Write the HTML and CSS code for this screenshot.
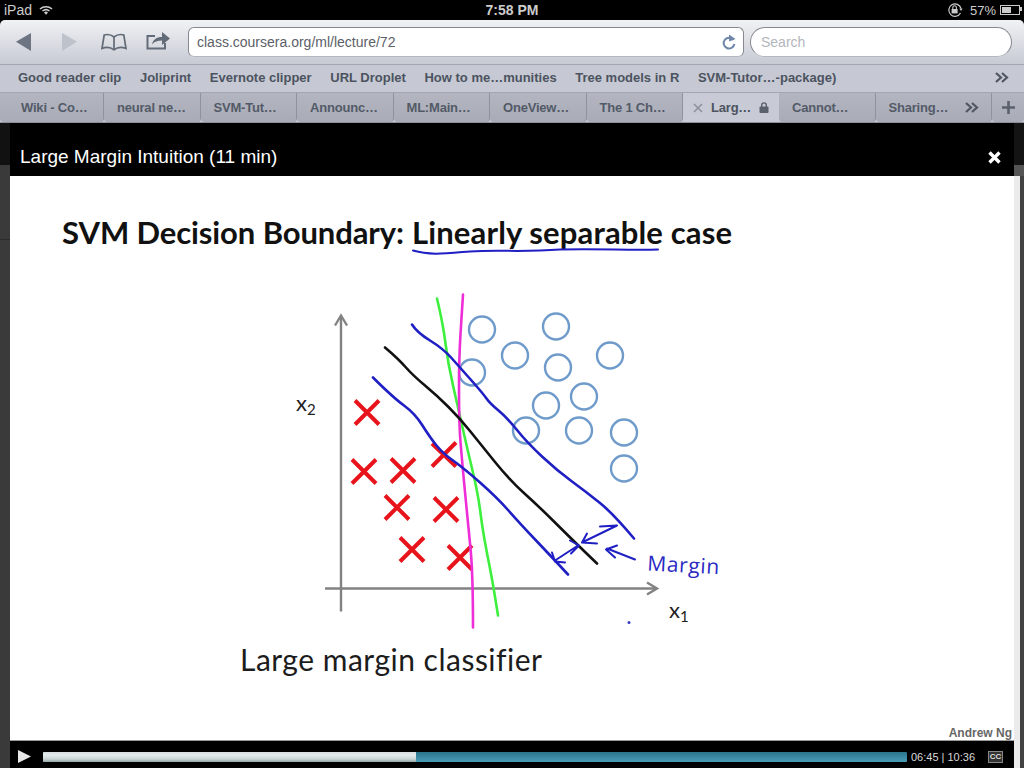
FILE: index.html
```html
<!DOCTYPE html>
<html lang="en">
<head>
  <meta charset="UTF-8">
  <title>Large Margin Intuition</title>
  <link rel="stylesheet" href="styles.css">
</head>
<body>
  <div class="status">
    <div class="status-left">
      <span>iPad</span>
      <svg class="wifi" width="14" height="10" viewBox="0 0 14 10">
        <path d="M1 4 A9 9 0 0 1 13 4" fill="none" stroke="#ccc" stroke-width="1.6"/>
        <path d="M3.5 6 A5.5 5.5 0 0 1 10.5 6" fill="none" stroke="#ccc" stroke-width="1.6"/>
        <path d="M5 7.5 L7 9.8 L9 7.5 A3 3 0 0 0 5 7.5 Z" fill="#ccc"/>
      </svg>
    </div>
    <div class="status-time">7:58 PM</div>
    <div class="status-right">
      <svg class="rotation-lock" width="16" height="16" viewBox="0 0 16 16">
        <path d="M14 6.5 A6.2 6.2 0 1 0 13.5 11" fill="none" stroke="#ccc" stroke-width="1.2"/>
        <path d="M12.3 6.5 L15.6 6.5 L14 9 Z" fill="#ccc"/>
        <rect x="4.6" y="7" width="6" height="4.4" fill="#ccc"/>
        <path d="M5.8 7 V5.6 A1.8 1.8 0 0 1 9.4 5.6 V7" fill="none" stroke="#ccc" stroke-width="1.1"/>
      </svg>
      <span class="battery-pct">57%</span>
      <div class="battery"><div class="battery-fill"></div></div>
    </div>
  </div>

  <div class="chrome">
    <div class="toolbar">
      <svg class="tool back" width="15" height="18" viewBox="0 0 15 18"><path d="M0 8.8 L15 0 V18 Z" fill="#6d7582"/></svg>
      <svg class="tool forward" width="15" height="18" viewBox="0 0 15 18"><path d="M15 8.8 L0 0 V18 Z" fill="#bdc2cb"/></svg>
      <svg class="tool book" width="26" height="18" viewBox="0 0 26 18">
        <path d="M13 4 C10 1.5 6 1.2 3.2 2 L1 15.5 C5 14 10 14.5 13 16.8 C16 14.5 21 14 25 15.5 L22.8 2 C20 1.2 16 1.5 13 4 Z M13 4 V16.8" fill="none" stroke="#636b78" stroke-width="1.7"/>
      </svg>
      <svg class="tool share" width="24" height="19" viewBox="0 0 24 19">
        <path d="M9 5 H1.5 V17.5 H19 V12" fill="none" stroke="#636b78" stroke-width="2"/>
        <path d="M6 13.5 C7 8.5 10.5 6 16 6 V1 L24 7.5 L16 14 V9.5 C11.5 9.5 8.5 10.5 6 13.5 Z" fill="#636b78"/>
      </svg>
      <div class="url">
        <span class="url-text">class.coursera.org/ml/lecture/72</span>
        <svg width="16" height="17" viewBox="0 0 16 17">
          <path d="M12.5 6 A5.4 5.4 0 1 0 13.4 10" fill="none" stroke="#6f87a8" stroke-width="2"/>
          <path d="M8 0.5 L14.5 5 L8 7.5 Z" fill="#6f87a8"/>
        </svg>
      </div>
      <div class="search">Search</div>
    </div>
    <div class="bookmarks">
      <span>Good reader clip</span>
      <span>Joliprint</span>
      <span>Evernote clipper</span>
      <span>URL Droplet</span>
      <span>How to me…munities</span>
      <span>Tree models in R</span>
      <span>SVM-Tutor…-package)</span>
      <svg class="chevrons" width="14" height="11" viewBox="0 0 14 11">
        <path d="M1 1 L6 5.5 L1 10 M7 1 L12 5.5 L7 10" fill="none" stroke="#4f5662" stroke-width="2.2"/>
      </svg>
    </div>
    <div class="tabs">
      <div class="tab first">Wiki - Co…</div>
      <div class="tab">neural ne…</div>
      <div class="tab">SVM-Tut…</div>
      <div class="tab">Announc…</div>
      <div class="tab">ML:Main…</div>
      <div class="tab">OneView…</div>
      <div class="tab">The 1 Ch…</div>
      <div class="tab active">
        <svg width="10" height="10" viewBox="0 0 10 10"><path d="M1 1 L9 9 M9 1 L1 9" stroke="#8b909b" stroke-width="1.5"/></svg>
        <span>Larg…</span>
        <svg width="10" height="11" viewBox="0 0 10 11">
          <rect x="0.5" y="4.5" width="9" height="6.5" rx="1" fill="#5a606c"/>
          <path d="M2.7 5 V3.2 A2.3 2.3 0 0 1 7.3 3.2 V5" fill="none" stroke="#5a606c" stroke-width="1.4"/>
        </svg>
      </div>
      <div class="tab">Cannot…</div>
      <div class="tab wide">
        <span>Sharing…</span>
        <svg width="14" height="11" viewBox="0 0 14 11">
          <path d="M1 1 L6 5.5 L1 10 M7 1 L12 5.5 L7 10" fill="none" stroke="#4f5662" stroke-width="2.2"/>
        </svg>
      </div>
      <div class="tab plus">
        <svg width="13" height="13" viewBox="0 0 13 13"><path d="M6.5 0 V13 M0 6.5 H13" stroke="#5a606c" stroke-width="2.6"/></svg>
      </div>
    </div>
  </div>

  <div class="stage">
    <div class="strip strip-left"></div>
    <div class="modal">
      <div class="modal-head">
        <span class="modal-title">Large Margin Intuition (11 min)</span>
        <svg width="13" height="13" viewBox="0 0 13 13"><path d="M1.5 1.5 L11.5 11.5 M11.5 1.5 L1.5 11.5" stroke="#fff" stroke-width="3.4"/></svg>
      </div>
      <svg class="slide" viewBox="10 175.5 1004 564" width="1004" height="564">
        <text class="slide-title" x="62" y="243" textLength="342">SVM Decision Boundary:</text>
        <text class="slide-title" x="412" y="243" textLength="320">Linearly separable case</text>
        <path class="ink-blue thin" d="M413 250 C430 255 445 253 470 251 C500 249 520 252 560 249 C600 248 630 250 658 249"/>

        <path class="axis" d="M341 316 V611 M325 588 H655"/>
        <path class="axis head" d="M335 325 L341 315 L347 325 M647 582 L657 588 L647 594"/>

        <g class="crosses">
          <path d="M355 400 L379 424 M379 400 L355 424"/>
          <path d="M352 459 L376 483 M376 459 L352 483"/>
          <path d="M391 458 L415 482 M415 458 L391 482"/>
          <path d="M432 443 L456 466 M456 442 L432 466"/>
          <path d="M385 495 L409 519 M409 495 L385 519"/>
          <path d="M434 497 L458 521 M458 497 L434 521"/>
          <path d="M400 537 L424 561 M424 537 L400 561"/>
          <path d="M448 545 L472 569 M472 545 L448 569"/>
        </g>

        <g class="circles">
          <circle cx="482" cy="329" r="13"/>
          <circle cx="556" cy="326" r="13"/>
          <circle cx="515" cy="355" r="13"/>
          <circle cx="558" cy="367" r="13"/>
          <circle cx="610" cy="355" r="13"/>
          <circle cx="472" cy="372" r="13"/>
          <circle cx="584" cy="396" r="13"/>
          <circle cx="546" cy="405" r="13"/>
          <circle cx="526" cy="430" r="13"/>
          <circle cx="579" cy="430" r="13"/>
          <circle cx="624" cy="432" r="13"/>
          <circle cx="624" cy="468" r="13"/>
        </g>

        <path class="ink-green" d="M437 298 Q443 323 445.5 343 Q448 363 453 385 Q458 407 462.5 427 Q467 447 472.5 470 Q478 493 480 509 Q482 525 484.5 539 Q487 553 490 568 Q493 583 498 615"/>
        <path class="ink-pink" d="M463 294 Q462 310 460.5 333.5 Q459 357 459 390 Q459 423 460.5 441.5 Q462 460 465 491.5 Q468 523 470.5 548 Q473 573 473 627"/>
        <path class="ink-black" d="M385 347 Q398 358 405.5 366.5 Q413 375 425 385 Q437 395 448.5 406.5 Q460 418 470 430.5 Q480 443 495 461.5 Q510 480 525 493.5 Q540 507 556.5 523.5 Q573 540 597 563"/>
        <path class="ink-blue" d="M412 324 Q417 332 430 340 Q443 348 451.5 357.5 Q460 367 471.5 380 Q483 393 486.5 398 Q490 403 498.5 410 Q507 417 517 429.5 Q527 442 542 456 Q557 470 572 481 Q587 492 600 502.5 Q613 513 634 538"/>
        <path class="ink-blue" d="M373 377 Q393 397 404 405 Q415 413 422.5 425 Q430 437 436.5 445 Q443 453 453 460 Q463 467 480 482 Q497 497 508.5 510 Q520 523 537.5 541.5 Q555 560 568 574"/>
        <path class="ink-blue thin" d="M555 560 L578 545 M570 540 L579 545 L571 553 M552 552 L555 561 L565 562"/>
        <path class="ink-blue thin" d="M582 542 L617 525 L600 526 M587 533 L582 542 L597 543"/>
        <path class="ink-blue thin" d="M635 559 L607 548 M617 545 L606 549 L615 557"/>
        <text class="margin-note" x="647" y="570" textLength="72" transform="rotate(3 647 570)">Margin</text>
        <circle cx="629" cy="622" r="1.5" fill="#3a3ac8"/>

        <text class="axis-label" x="296" y="410">x<tspan class="sub" dy="4">2</tspan></text>
        <text class="axis-label" x="669" y="617">x<tspan class="sub" dy="4">1</tspan></text>
        <text class="caption" x="240" y="670" textLength="302">Large margin classifier</text>
        <text class="credit" x="1012" y="736">Andrew Ng</text>
      </svg>
      <div class="controls">
        <svg class="play" width="13" height="13" viewBox="0 0 13 13"><path d="M0 0 L13 6.5 L0 13 Z" fill="#e8e8e8"/></svg>
        <div class="progress">
          <div class="progress-played" style="width: 43.2%"></div>
        </div>
        <span class="time">06:45 | 10:36</span>
        <span class="cc">CC</span>
      </div>
    </div>
    <div class="strip strip-right"></div>
  </div>
</body>
</html>
```

FILE: styles.css
```css
html, body {
  margin: 0;
  padding: 0;
  height: 100%;
  overflow: hidden;
  background: #000;
  font-family: "Liberation Sans", Arial, sans-serif;
}
body {
  display: flex;
  flex-direction: column;
}

/* ipad status bar */
.status {
  height: 20px;
  flex: none;
  display: flex;
  align-items: center;
  justify-content: space-between;
  position: relative;
  padding: 0 2px 0 4px;
  color: #ccc;
  font-size: 14px;
}
.status-left {
  display: flex;
  align-items: center;
  gap: 7px;
}
.status-time {
  position: absolute;
  left: 0;
  right: 0;
  text-align: center;
  font-weight: bold;
}
.status-right {
  display: flex;
  align-items: center;
  gap: 4px;
}
.rotation-lock {
  margin-right: 3px;
}
.battery-pct {
  font-size: 13px;
}
.battery {
  width: 16px;
  height: 6px;
  border: 1px solid #ccc;
  padding: 1px;
  margin-right: 2px;
  position: relative;
}
.battery::after {
  content: "";
  position: absolute;
  right: -3px;
  top: 1px;
  width: 2px;
  height: 4px;
  background: #ccc;
}
.battery-fill {
  width: 57%;
  height: 100%;
  background: #ccc;
}

/* safari chrome */
.chrome {
  flex: none;
  border-radius: 5px 5px 0 0;
  overflow: hidden;
}
.toolbar {
  height: 44px;
  display: flex;
  align-items: center;
  background: linear-gradient(#f1f2f5, #c7cad3);
  border-bottom: 1px solid #a3a6ad;
}
.tool {
  flex: none;
}
.back {
  margin-left: 16px;
}
.forward {
  margin-left: 31px;
}
.book {
  margin-left: 24px;
}
.share {
  margin-left: 19px;
  margin-top: -3px;
}
.url {
  margin-left: 18px;
  width: 556px;
  height: 30px;
  box-sizing: border-box;
  display: flex;
  align-items: center;
  justify-content: space-between;
  padding: 0 6px 0 8px;
  background: #fff;
  border: 1px solid #85888f;
  border-bottom-color: #b5b8bf;
  border-radius: 6px;
  font-size: 14px;
  color: #5c6068;
}
.search {
  margin-left: 6px;
  width: 262px;
  height: 30px;
  box-sizing: border-box;
  display: flex;
  align-items: center;
  padding-left: 10px;
  background: #fff;
  border: 1px solid #85888f;
  border-bottom-color: #b5b8bf;
  border-radius: 15px;
  font-size: 14px;
  color: #b4b6bb;
}
.bookmarks {
  height: 25px;
  display: flex;
  align-items: center;
  gap: 18.6px;
  padding: 0 0 2px 18px;
  background: #c6c9d3;
  border-bottom: 1px solid #a3a6ad;
  font-size: 13px;
  font-weight: bold;
  color: #4c5360;
}
.chevrons {
  margin-left: auto;
  margin-right: 15px;
}
.tabs {
  height: 29px;
  display: flex;
  background: #c6c9d3;
  border-bottom: 1px solid #8d9098;
  font-size: 13px;
  font-weight: bold;
  letter-spacing: -0.2px;
  color: #535a67;
}
.tab {
  width: 96.5px;
  flex: none;
  box-sizing: border-box;
  display: flex;
  align-items: center;
  gap: 6px;
  padding-left: 13px;
  background: linear-gradient(#b3b6c1, #a9acb7);
  border-right: 1px solid #90939c;
  border-radius: 0 0 4px 4px;
}
.tab.first {
  width: 104px;
  padding-left: 21px;
}
.tab.active {
  width: 96px;
  padding-left: 10px;
  gap: 8px;
  background: #c8cbd5;
  border-right-color: #c8cbd5;
  color: #4c5360;
}
.tab.wide {
  width: 116.5px;
  justify-content: space-between;
  padding-right: 12px;
}
.tab.plus {
  width: 32px;
  padding-left: 10px;
  border-right: none;
}

/* lecture overlay */
.stage {
  flex: 1;
  display: flex;
  min-height: 0;
}
.strip {
  flex: none;
  width: 10px;
}
.strip-left {
  background: linear-gradient(#111 0, #111 42px, #3a3a3a 42px, #3a3a3a 116px, #2a2a2a 116px, #2a2a2a 117px, #3a3a3a 117px);
}
.strip-right {
  background:
    linear-gradient(#141414 0, #141414 42px, #555 42px, #555 53px, transparent 53px),
    linear-gradient(90deg, #ebebeb 6px, #424242 6px);
}
.modal {
  width: 1004px;
  flex: none;
  display: flex;
  flex-direction: column;
}
.modal-head {
  height: 53px;
  flex: none;
  box-sizing: border-box;
  display: flex;
  align-items: flex-end;
  justify-content: space-between;
  padding: 0 13px 8px 10px;
  background: #000;
}
.modal-title {
  color: #fff;
  font-size: 19px;
}
.modal-head svg {
  margin-bottom: 4px;
}
.slide {
  display: block;
  background: #fff;
  flex: none;
}
.slide-title {
  font-family: Lato, sans-serif;
  font-weight: bold;
  font-size: 31px;
  fill: #111;
}
.caption {
  font-family: Lato, sans-serif;
  font-size: 30px;
  font-variant-ligatures: none;
  fill: #1c1c1c;
}
.axis-label {
  font-family: Lato, sans-serif;
  font-size: 22px;
  fill: #222;
}
.sub {
  font-size: 15px;
}
.credit {
  font-family: "Liberation Sans", sans-serif;
  font-size: 12px;
  font-weight: bold;
  fill: #666;
  text-anchor: end;
}
.margin-note {
  font-family: "Open Sans", sans-serif;
  font-size: 21px;
  fill: #2a2ac4;
}
.axis {
  fill: none;
  stroke: #828282;
  stroke-width: 2.4;
}
.crosses path {
  fill: none;
  stroke: #e8141c;
  stroke-width: 4;
}
.circles circle {
  fill: none;
  stroke: #6f9bcb;
  stroke-width: 2.4;
}
.ink-green, .ink-pink, .ink-black, .ink-blue {
  fill: none;
  stroke-width: 2.6;
  stroke-linejoin: round;
  stroke-linecap: round;
}
.ink-green {
  stroke: #3df03d;
}
.ink-pink {
  stroke: #ee2fd8;
}
.ink-black {
  stroke: #111;
}
.ink-blue {
  stroke: #1f1fc4;
}
.ink-blue.thin {
  stroke-width: 2;
}
.controls {
  flex: 1;
  display: flex;
  align-items: center;
  padding: 4px 0 0 8px;
  background: #000;
  border-top: 1px solid #9a9a9a;
}
.play {
  flex: none;
}
.progress {
  margin-left: 12px;
  width: 864px;
  height: 10px;
  flex: none;
  background: linear-gradient(#2a748c, #4a9cb6);
  border-radius: 1px;
  overflow: hidden;
}
.progress-played {
  height: 100%;
  background: linear-gradient(#d5dede, #e4ebeb 30%, #cbd5d6 70%, #94a6a9);
}
.time {
  margin-left: 4px;
  width: 77px;
  flex: none;
  white-space: nowrap;
  font-size: 11px;
  color: #d8d8d8;
}
.cc {
  width: 15px;
  height: 12px;
  flex: none;
  box-sizing: border-box;
  display: flex;
  align-items: center;
  justify-content: center;
  background: #333;
  border: 1px solid #888;
  font-size: 8px;
  font-weight: bold;
  color: #ddd;
}
```
